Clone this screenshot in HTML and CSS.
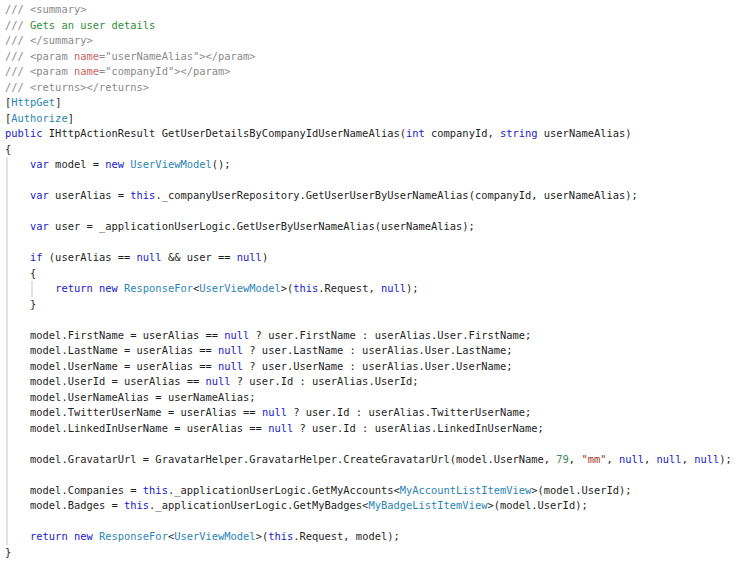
FILE: index.html
```html
<!DOCTYPE html>
<html>
<head>
<meta charset="utf-8">
<link rel="stylesheet" href="styles.css">
</head>
<body>
<div class="code">
<div class="ln"><span class="c">/// &lt;summary&gt;</span></div>
<div class="ln"><span class="c">/// </span><span class="d">Gets an user details</span></div>
<div class="ln"><span class="c">/// &lt;/summary&gt;</span></div>
<div class="ln"><span class="c">/// &lt;param </span><span class="an">name</span><span class="c">="userNameAlias"&gt;&lt;/param&gt;</span></div>
<div class="ln"><span class="c">/// &lt;param </span><span class="an">name</span><span class="c">="companyId"&gt;&lt;/param&gt;</span></div>
<div class="ln"><span class="c">/// &lt;returns&gt;&lt;/returns&gt;</span></div>
<div class="ln">[<span class="t">HttpGet</span>]</div>
<div class="ln">[<span class="t">Authorize</span>]</div>
<div class="ln"><span class="k">public</span> IHttpActionResult GetUserDetailsByCompanyIdUserNameAlias(<span class="k">int</span> companyId, <span class="k">string</span> userNameAlias)</div>
<div class="ln">{</div>
<div class="block">
<div class="ln">    <span class="k">var</span> model = <span class="k">new</span> <span class="t">UserViewModel</span>();</div>
<div class="ln"> </div>
<div class="ln">    <span class="k">var</span> userAlias = <span class="k">this</span>._companyUserRepository.GetUserUserByUserNameAlias(companyId, userNameAlias);</div>
<div class="ln"> </div>
<div class="ln">    <span class="k">var</span> user = _applicationUserLogic.GetUserByUserNameAlias(userNameAlias);</div>
<div class="ln"> </div>
<div class="ln">    <span class="k">if</span> (userAlias == <span class="k">null</span> &amp;&amp; user == <span class="k">null</span>)</div>
<div class="ln">    {</div>
<div class="block inner">
<div class="ln">        <span class="k">return</span> <span class="k">new</span> <span class="t">ResponseFor</span>&lt;<span class="t">UserViewModel</span>&gt;(<span class="k">this</span>.Request, <span class="k">null</span>);</div>
</div>
<div class="ln">    }</div>
<div class="ln"> </div>
<div class="ln">    model.FirstName = userAlias == <span class="k">null</span> ? user.FirstName : userAlias.User.FirstName;</div>
<div class="ln">    model.LastName = userAlias == <span class="k">null</span> ? user.LastName : userAlias.User.LastName;</div>
<div class="ln">    model.UserName = userAlias == <span class="k">null</span> ? user.UserName : userAlias.User.UserName;</div>
<div class="ln">    model.UserId = userAlias == <span class="k">null</span> ? user.Id : userAlias.UserId;</div>
<div class="ln">    model.UserNameAlias = userNameAlias;</div>
<div class="ln">    model.TwitterUserName = userAlias == <span class="k">null</span> ? user.Id : userAlias.TwitterUserName;</div>
<div class="ln">    model.LinkedInUserName = userAlias == <span class="k">null</span> ? user.Id : userAlias.LinkedInUserName;</div>
<div class="ln"> </div>
<div class="ln">    model.GravatarUrl = GravatarHelper.GravatarHelper.CreateGravatarUrl(model.UserName, <span class="n">79</span>, <span class="s">"mm"</span>, <span class="k">null</span>, <span class="k">null</span>, <span class="k">null</span>);</div>
<div class="ln"> </div>
<div class="ln">    model.Companies = <span class="k">this</span>._applicationUserLogic.GetMyAccounts&lt;<span class="t">MyAccountListItemView</span>&gt;(model.UserId);</div>
<div class="ln">    model.Badges = <span class="k">this</span>._applicationUserLogic.GetMyBadges&lt;<span class="t">MyBadgeListItemView</span>&gt;(model.UserId);</div>
<div class="ln"> </div>
<div class="ln">    <span class="k">return</span> <span class="k">new</span> <span class="t">ResponseFor</span>&lt;<span class="t">UserViewModel</span>&gt;(<span class="k">this</span>.Request, model);</div>
</div>
<div class="ln">}</div>
</div>
</body>
</html>
```
FILE: styles.css
```css
html, body {
  margin: 0;
  padding: 0;
  background: #ffffff;
}

.code {
  padding: 2px 0 0 5px;
  font-family: "DejaVu Sans Mono", "Liberation Mono", monospace;
  font-size: 10.42px;
  line-height: 15.5px;
  color: #1e1e1e;
}

.ln {
  white-space: pre;
  height: 15.5px;
}

.block {
  background: linear-gradient(#e2e2e2, #e2e2e2) no-repeat 1px 0 / 2px 100%;
}

.block.inner {
  background-position: 26px 0;
}

.c { color: #8a8a8a; }
.d { color: #2f8f3a; }
.an { color: #c86464; }
.k { color: #2020d0; }
.t { color: #2b85b5; }
.n { color: #3a8a5a; }
.s { color: #a33a2a; }
```
